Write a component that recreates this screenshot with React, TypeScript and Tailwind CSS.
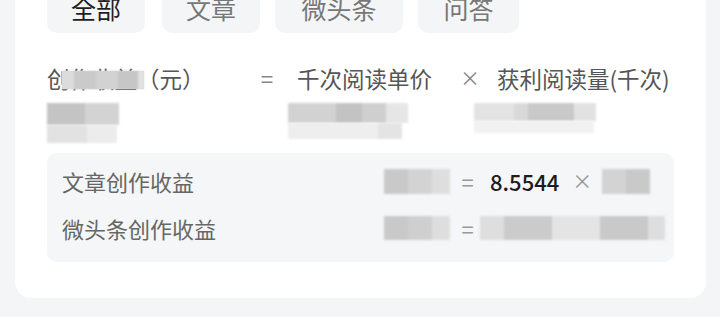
import React from "react";

const font = {
  fontFamily: '"Noto Sans CJK SC", "Noto Sans", sans-serif',
};

type Cell = { w: number; c: string };

function Mosaic({ cells, h, className = "" }: { cells: Cell[]; h: number; className?: string }) {
  return (
    <div className={`flex shrink-0 blur-[1px] ${className}`} style={{ height: h }}>
      {cells.map((cell, i) => (
        <div key={i} style={{ width: cell.w, backgroundColor: cell.c }} />
      ))}
    </div>
  );
}

const tabs = [
  { label: "全部", active: true, w: "w-[98px]" },
  { label: "文章", active: false, w: "w-[98px]" },
  { label: "微头条", active: false, w: "w-[128px]" },
  { label: "问答", active: false, w: "w-[101px]" },
];

export default function App() {
  return (
    <div
      className="h-[317px] w-[720px] overflow-hidden bg-[#f4f5f7] pl-[15px] pr-[14px]"
      style={font}
    >
      <div className="-mt-[20px] h-[318px] rounded-[16px] bg-white px-[32px]">
        {/* 分类标签 */}
        <div className="flex gap-[15px]">
          {tabs.map((t, i) => (
            <div
              key={t.label}
              className={`flex h-[53px] items-center justify-center rounded-[10px] bg-[#f4f5f7] pt-[4px] text-[25px] ${t.w} ${
                i === 1 ? "ml-[2px]" : ""
              } ${t.active ? "text-[#1f1f1f]" : "text-[#777]"}`}
            >
              {t.label}
            </div>
          ))}
        </div>

        {/* 公式 */}
        <div className="relative mt-[30px] flex h-[30px] items-center text-[22.5px] leading-none text-[#555]">
          <span className="w-[210px]">创作收益（元）</span>
          <span className="w-[20px] text-center text-[#888]">=</span>
          <span className="ml-[20px] w-[163px]">千次阅读单价</span>
          <span className="w-[20px] text-center text-[20px] text-[#888]">×</span>
          <span className="ml-[17px]">获利阅读量(千次)</span>
          <div className="absolute left-[15px] top-[8px] h-[18px] w-[82px] bg-[#d4d4d4]">
            <Mosaic
              h={18}
              cells={[
                { w: 12, c: "#dcdcdc" },
                { w: 22, c: "#cacaca" },
                { w: 22, c: "#d2d2d2" },
                { w: 20, c: "#c6c6c6" },
                { w: 6, c: "#e2e2e2" },
              ]}
            />
          </div>
        </div>

        {/* 模糊数值 */}
        <div className="flex h-[60px] pt-[10px]">
          <div className="flex flex-col">
            <Mosaic h={22} cells={[{ w: 38, c: "#c4c4c4" }, { w: 34, c: "#d3d3d3" }]} />
            <Mosaic h={18} cells={[{ w: 40, c: "#e2e2e2" }, { w: 30, c: "#ececec" }]} />
          </div>
          <div className="ml-[169px] flex flex-col">
            <Mosaic
              h={20}
              cells={[
                { w: 48, c: "#d2d2d2" },
                { w: 26, c: "#c3c3c3" },
                { w: 24, c: "#cfcfcf" },
                { w: 22, c: "#e6e6e6" },
              ]}
            />
            <Mosaic h={16} cells={[{ w: 90, c: "#eeeeee" }, { w: 24, c: "#e4e4e4" }]} />
          </div>
          <div className="ml-[66px] flex flex-col">
            <Mosaic
              h={18}
              cells={[
                { w: 40, c: "#e3e3e3" },
                { w: 14, c: "#d9d9d9" },
                { w: 46, c: "#c9c9c9" },
                { w: 22, c: "#e2e2e2" },
              ]}
            />
            <Mosaic h={12} cells={[{ w: 120, c: "#f1f1f1" }]} />
          </div>
        </div>

        {/* 明细 */}
        <div className="flex h-[109px] flex-col gap-[17px] rounded-[10px] bg-[#f5f6f7] pl-[15px] pt-[13px] text-[22px] leading-none">
          <div className="flex h-[30px] items-center">
            <span className="w-[322px] text-[#666]">文章创作收益</span>
            <Mosaic
              h={25}
              cells={[
                { w: 24, c: "#c9c9c9" },
                { w: 24, c: "#d3d3d3" },
                { w: 18, c: "#dedede" },
              ]}
            />
            <span className="ml-[10px] w-[15px] text-center text-[#999]">=</span>
            <span className="ml-[15px] font-medium text-[#1c1c1c]">8.5544</span>
            <span className="ml-[13px] text-[20px] text-[#999]">×</span>
            <Mosaic
              className="ml-[10px]"
              h={25}
              cells={[
                { w: 24, c: "#d3d3d3" },
                { w: 24, c: "#c9c9c9" },
              ]}
            />
          </div>
          <div className="flex h-[30px] items-center">
            <span className="w-[322px] text-[#666]">微头条创作收益</span>
            <Mosaic
              h={24}
              cells={[
                { w: 24, c: "#c9c9c9" },
                { w: 24, c: "#cfcfcf" },
                { w: 18, c: "#dedede" },
              ]}
            />
            <span className="ml-[10px] w-[15px] text-center text-[#999]">=</span>
            <Mosaic
              className="ml-[5px]"
              h={24}
              cells={[
                { w: 24, c: "#dedede" },
                { w: 48, c: "#cbcbcb" },
                { w: 48, c: "#e4e4e4" },
                { w: 48, c: "#c9c9c9" },
                { w: 17, c: "#dedede" },
              ]}
            />
          </div>
        </div>
      </div>
    </div>
  );
}
